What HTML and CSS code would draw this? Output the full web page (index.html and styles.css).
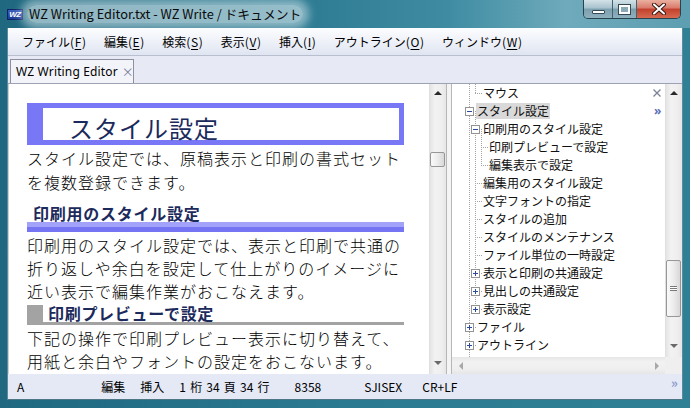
FILE: index.html
```html
<!DOCTYPE html>
<html lang="ja">
<head>
<meta charset="utf-8">
<title>WZ Writing Editor.txt - WZ Write / ドキュメント</title>
<link rel="stylesheet" href="styles.css">
</head>
<body>
<div class="window">
  <div class="titlebar">
    <span class="app-icon">WZ</span>
    <span class="title">WZ Writing Editor.txt - WZ Write / ドキュメント</span>
    <div class="caption">
      <span class="cb cb-min"><i class="g-min"></i></span>
      <span class="cb cb-max"><i class="g-max"></i></span>
      <span class="cb cb-close">
        <svg width="14" height="12" viewBox="0 0 14 12"><path d="M2 1.5 L12 10.5 M12 1.5 L2 10.5" stroke="#3a1a14" stroke-width="4" stroke-linecap="round"/><path d="M2 1.5 L12 10.5 M12 1.5 L2 10.5" stroke="#ffffff" stroke-width="2" stroke-linecap="round"/></svg>
      </span>
    </div>
  </div>
  <div class="client">
    <div class="menubar">
      <span class="menu">ファイル(<u>F</u>)</span>
      <span class="menu">編集(<u>E</u>)</span>
      <span class="menu">検索(<u>S</u>)</span>
      <span class="menu">表示(<u>V</u>)</span>
      <span class="menu">挿入(<u>I</u>)</span>
      <span class="menu">アウトライン(<u>O</u>)</span>
      <span class="menu">ウィンドウ(<u>W</u>)</span>
    </div>
    <div class="tabbar">
      <div class="tab"><span class="tab-text">WZ Writing Editor</span><span class="tab-close">×</span></div>
    </div>
    <div class="main">
      <div class="editor">
        <h1 class="h1">スタイル設定</h1>
        <p class="para">スタイル設定では、原稿表示と印刷の書式セット<br>を複数登録できます。</p>
        <h2 class="h2">印刷用のスタイル設定</h2>
        <p class="para p2">印刷用のスタイル設定では、表示と印刷で共通の<br>折り返しや余白を設定して仕上がりのイメージに<br>近い表示で編集作業がおこなえます。</p>
        <h3 class="h3">印刷プレビューで設定</h3>
        <p class="para p3">下記の操作で印刷プレビュー表示に切り替えて、<br>用紙と余白やフォントの設定をおこないます。</p>
      </div>
      <div class="vscroll">
        <div class="sb-btn"><i class="arr-up"></i></div>
        <div class="sb-track"><div class="thumb ed-thumb"></div></div>
        <div class="sb-btn sb-btn-down"><i class="arr-down"></i></div>
      </div>
      <div class="splitter"></div>
      <div class="treepane">
        <div class="tree-area">
          <div class="tree">
            <svg class="tree-lines" width="213" height="273" viewBox="0 0 213 273">
              <g stroke="#a4a4a4" stroke-width="1" stroke-dasharray="1 1" fill="none">
                <path d="M17.5 0 V273"/>
                <path d="M23.5 0 V9"/>
                <path d="M23 9.5 H30"/>
                <path d="M23.5 27 V225"/>
                <path d="M29.5 45 V81"/>
                <path d="M29 63.5 H36"/>
                <path d="M29 81.5 H36"/>
                <path d="M23 45.5 H30"/>
                <path d="M23 99.5 H30"/>
                <path d="M23 117.5 H30"/>
                <path d="M23 135.5 H30"/>
                <path d="M23 153.5 H30"/>
                <path d="M23 171.5 H30"/>
                <path d="M23 189.5 H30"/>
                <path d="M23 207.5 H30"/>
                <path d="M23 225.5 H30"/>
                <path d="M17 27.5 H24"/>
                <path d="M17 243.5 H24"/>
                <path d="M17 261.5 H24"/>
              </g>
            </svg>
            <div class="node l1 leaf"><span class="label">マウス</span></div>
            <div class="node l0"><span class="exp minus"></span><span class="label sel">スタイル設定</span></div>
            <div class="node l1"><span class="exp minus"></span><span class="label">印刷用のスタイル設定</span></div>
            <div class="node l2 leaf"><span class="label">印刷プレビューで設定</span></div>
            <div class="node l2 leaf"><span class="label">編集表示で設定</span></div>
            <div class="node l1 leaf"><span class="label">編集用のスタイル設定</span></div>
            <div class="node l1 leaf"><span class="label">文字フォントの指定</span></div>
            <div class="node l1 leaf"><span class="label">スタイルの追加</span></div>
            <div class="node l1 leaf"><span class="label">スタイルのメンテナンス</span></div>
            <div class="node l1 leaf"><span class="label">ファイル単位の一時設定</span></div>
            <div class="node l1"><span class="exp plus"></span><span class="label">表示と印刷の共通設定</span></div>
            <div class="node l1"><span class="exp plus"></span><span class="label">見出しの共通設定</span></div>
            <div class="node l1"><span class="exp plus"></span><span class="label">表示設定</span></div>
            <div class="node l0"><span class="exp plus"></span><span class="label">ファイル</span></div>
            <div class="node l0"><span class="exp plus"></span><span class="label">アウトライン</span></div>
            <svg class="tree-close" width="8" height="8" viewBox="0 0 8 8"><path d="M0.5 0.5 L7.5 7.5 M7.5 0.5 L0.5 7.5" stroke="#7b8196" stroke-width="1.3"/></svg>
            <span class="tree-more">»</span>
          </div>
          <div class="vscroll tree-vscroll">
            <div class="sb-btn"><i class="arr-up"></i></div>
            <div class="sb-track"><div class="thumb tree-thumb"><i class="grip"></i></div></div>
            <div class="sb-btn sb-btn-down"><i class="arr-down"></i></div>
          </div>
        </div>
        <div class="hscroll-row">
          <div class="hscroll">
            <div class="hb-btn"><i class="arr-left"></i></div>
            <div class="hb-track"></div>
            <div class="hb-btn"><i class="arr-right"></i></div>
          </div>
          <div class="corner"></div>
        </div>
      </div>
    </div>
    <div class="statusbar">
      <span class="pane p-a">A</span>
      <span class="pane p-edit">編集</span>
      <span class="pane p-ins">挿入</span>
      <span class="pane p-pos">1 桁 34 頁 34 行</span>
      <span class="pane p-size">8358</span>
      <span class="pane p-enc">SJISEX</span>
      <span class="pane p-eol">CR+LF</span>
      <span class="status-more">»</span>
    </div>
  </div>
</div>
</body>
</html>
```

FILE: styles.css
```css
* { box-sizing: border-box; }
html, body { margin: 0; padding: 0; }
body {
  width: 690px;
  height: 408px;
  overflow: hidden;
  font-family: "Noto Sans CJK JP", "Noto Sans", sans-serif;
  font-size: 12px;
  color: #000;
}
.window {
  width: 690px;
  height: 408px;
  display: flex;
  flex-direction: column;
  background: linear-gradient(to right, #1f6880 0%, #2a7a91 50%, #2f7f95 100%);
}

/* title bar */
.titlebar {
  height: 28px;
  flex: 0 0 28px;
  display: flex;
  align-items: flex-start;
  padding: 0 9px 0 7px;
  background: linear-gradient(to right, #1f6880 0%, #2a7890 40%, #3f8ca2 65%, #6eaabb 82%, #5d9eb1 100%);
}
.app-icon {
  width: 16px;
  height: 11px;
  margin-top: 9px;
  background: linear-gradient(#3c5fbf, #1b3a96);
  border: 1px solid #0e2466;
  color: #fff;
  font-family: "Liberation Sans", sans-serif;
  font-weight: bold;
  font-style: italic;
  font-size: 8px;
  line-height: 9px;
  text-align: center;
  letter-spacing: -0.5px;
}
.title {
  margin-left: 4px;
  margin-top: 5px;
  height: 18px;
  line-height: 18px;
  padding: 0 2px;
  font-size: 12.8px;
  color: #0a0a0a;
  background: rgba(236, 246, 248, 0.55);
  border-radius: 9px;
  box-shadow: 0 0 8px 6px rgba(236, 246, 248, 0.5);
  white-space: nowrap;
}
.caption {
  margin-left: auto;
  display: flex;
  height: 19px;
  border: 1px solid #26434f;
  border-top: 0;
  border-radius: 0 0 5px 5px;
  overflow: hidden;
}
.cb {
  height: 18px;
  display: flex;
  align-items: center;
  justify-content: center;
  border-right: 1px solid #3f6370;
}
.cb-min, .cb-max {
  background: linear-gradient(#d4e2e8 0%, #a7c2cd 45%, #7c9fae 50%, #8fb0bd 100%);
}
.cb-min { width: 29px; }
.cb-max { width: 24px; }
.cb-close {
  width: 43px;
  border-right: 0;
  background: linear-gradient(#eab0a0 0%, #d9796a 45%, #c2402c 50%, #d66a50 100%);
}
.g-min {
  display: block;
  width: 13px;
  height: 4px;
  margin-top: 6px;
  background: #fff;
  border: 1px solid #334a55;
  border-radius: 1px;
}
.g-max {
  display: block;
  width: 11px;
  height: 9px;
  border: 2px solid #fff;
  outline: 1px solid #334a55;
  background: #8aa9b6;
}

/* client */
.client {
  flex: 1;
  margin: 0 7px 8px;
  border-left: 1px solid #5d8a9c;
  border-right: 1px solid #5d8a9c;
  border-bottom: 1px solid #4d7686;
  display: flex;
  flex-direction: column;
  background: #fff;
  min-height: 0;
}
.menubar {
  height: 28px;
  flex: 0 0 28px;
  display: flex;
  align-items: center;
  padding-left: 5px;
  background: linear-gradient(#fcfdfe 0%, #eef1f8 50%, #dfe5f1 100%);
  border-bottom: 1px solid #b9bfcf;
}
.menu {
  flex: none;
  padding: 0 9px;
  font-size: 12px;
  line-height: 18px;
  white-space: nowrap;
}
.menu u { text-underline-offset: 2px; padding: 0 0.6px; }

.tabbar {
  height: 27px;
  flex: 0 0 27px;
  background: #e7eaf5;
  padding: 3px 0 0 2px;
  display: flex;
}
.tab {
  width: 124px;
  height: 24px;
  border: 1px solid #8d909e;
  border-bottom: 0;
  background: #f3f4fa;
  display: flex;
  align-items: center;
  padding-left: 5px;
  font-size: 12px;
  white-space: nowrap;
}
.tab-text { font-family: "Noto Sans", sans-serif; font-size: 12px; letter-spacing: 0.15px; }
.tab-close {
  margin-left: 4px;
  color: #7b819a;
  font-size: 12px;
}

/* main */
.main {
  height: 291px;
  flex: 0 0 291px;
  display: flex;
  border-top: 1px solid #9da2b2;
  overflow: hidden;
}
.editor {
  flex: 0 0 421px;
  background: #fff;
  padding: 19px 0 0 18px;
  overflow: hidden;
  border-left: 1px solid #d0d0d0;
}
.h1 {
  margin: 0;
  width: 377px;
  height: 42px;
  border: 5px solid #7878f7;
  border-left-width: 16px;
  padding: 8px 0 0 26px;
  font-size: 24px;
  line-height: 24px;
  font-weight: 400;
  letter-spacing: 1px;
  color: #1b2a5c;
  white-space: nowrap;
}
.para {
  margin: 2px 0 0;
  font-size: 16px;
  line-height: 23.5px;
  letter-spacing: 1px;
  font-weight: 300;
  white-space: nowrap;
  color: #000;
}
.h2 {
  margin: 0;
  width: 377px;
  padding: 10px 0 0 6px;
  font-size: 16px;
  line-height: 18px;
  font-weight: bold;
  letter-spacing: 0.75px;
  color: #1c2a5c;
  white-space: nowrap;
}
.h2::after {
  content: "";
  display: block;
  margin-left: -6px;
  height: 10px;
  background: linear-gradient(#a2a2fb 0 50%, #7575f4 50% 100%);
}
.p2 { margin-top: 2px; line-height: 23px; }
.h3 {
  margin: 2px 0 0;
  width: 377px;
  height: 20px;
  display: flex;
  border-bottom: 3px solid #a3a3a3;
  font-size: 16px;
  line-height: 16px;
  font-weight: bold;
  letter-spacing: 0.7px;
  color: #1c2a5c;
  white-space: nowrap;
}
.h3::before {
  content: "";
  flex: 0 0 16px;
  height: 17px;
  margin-right: 5px;
  background: #a3a3a3;
}
.p3 { margin-top: 2px; line-height: 23px; }

/* scrollbars */
.vscroll {
  flex: 0 0 17px;
  width: 17px;
  display: flex;
  flex-direction: column;
  background: linear-gradient(to right, #e4e4e4, #f2f2f2 30%, #efefef 70%, #e6e6e6);
  border-left: 1px solid #e0e0e0;
}
.sb-btn {
  height: 17px;
  flex: 0 0 17px;
  display: flex;
  align-items: center;
  justify-content: center;
}
.sb-btn-down { align-items: flex-start; padding-top: 4px; }
.sb-track { flex: 1; }
.thumb {
  width: 15px;
  border: 1px solid #979797;
  border-radius: 2px;
  background: linear-gradient(to right, #fafafa, #ececec 50%, #d8d8d8);
}
.ed-thumb { margin-top: 51px; height: 15px; }
.tree-thumb {
  margin-top: 159px;
  height: 57px;
  display: flex;
  align-items: center;
  justify-content: center;
}
.grip {
  display: block;
  width: 7px;
  height: 5px;
  border-top: 1px solid #7a7a7a;
  border-bottom: 1px solid #7a7a7a;
  background: linear-gradient(#fff 0 40%, #7a7a7a 40% 60%, #fff 60%);
}
.arr-up, .arr-down, .arr-left, .arr-right { display: block; width: 0; height: 0; }
.arr-up { border-left: 4px solid transparent; border-right: 4px solid transparent; border-bottom: 4px solid #2a2a2a; }
.arr-down { border-left: 4px solid transparent; border-right: 4px solid transparent; border-top: 4px solid #6a6a6a; }
.arr-left { border-top: 4px solid transparent; border-bottom: 4px solid transparent; border-right: 4px solid #a8a8a8; }
.arr-right { border-top: 4px solid transparent; border-bottom: 4px solid transparent; border-left: 4px solid #a8a8a8; }

.splitter {
  flex: 0 0 6px;
  background: #f4f4f4;
  border-left: 1px solid #b7b7b7;
  border-right: 1px solid #b7b7b7;
}

/* tree */
.treepane {
  flex: 1;
  display: flex;
  flex-direction: column;
  min-width: 0;
}
.tree-area {
  height: 273px;
  flex: 0 0 273px;
  display: flex;
}
.tree {
  flex: 1;
  position: relative;
  z-index: 0;
  background: #fff;
  overflow: hidden;
}
.tree-lines {
  position: absolute;
  left: 0;
  top: 0;
  z-index: -1;
}
.node {
  height: 18px;
  display: flex;
  align-items: flex-start;
  white-space: nowrap;
  font-size: 12px;
  color: #111;
}
.l0 { padding-left: 13px; }
.l1 { padding-left: 19px; }
.l2 { padding-left: 25px; }
.leaf .label { margin-left: 11px; }
.exp {
  position: relative;
  flex: 0 0 9px;
  width: 9px;
  height: 9px;
  margin: 5px 2px 0 0;
  border: 1px solid #939393;
  background: #fff;
}
.exp::before {
  content: "";
  position: absolute;
  left: 1px;
  top: 3px;
  width: 5px;
  height: 1px;
  background: #2a4b9b;
}
.exp.plus::after {
  content: "";
  position: absolute;
  left: 3px;
  top: 1px;
  width: 1px;
  height: 5px;
  background: #2a4b9b;
}
.label {
  display: inline-block;
  margin-top: 1px;
  padding: 0 1px;
  line-height: 16px;
  height: 16px;
}
.label.sel { background: #d9d9d9; }
.tree-close {
  position: absolute;
  left: 201px;
  top: 5px;
}
.tree-more {
  position: absolute;
  left: 202px;
  top: 20px;
  line-height: 14px;
  font-family: "Noto Sans", sans-serif;
  font-size: 12px;
  font-weight: bold;
  color: #6070b8;
}
.tree-vscroll { flex: 0 0 17px; }

.hscroll-row {
  flex: 1;
  display: flex;
}
.hscroll {
  flex: 1;
  display: flex;
  align-items: center;
  background: linear-gradient(#e6e6e6, #f2f2f2 30%, #efefef 70%, #e6e6e6);
}
.hb-btn {
  width: 17px;
  height: 17px;
  display: flex;
  align-items: center;
  justify-content: center;
}
.hb-track { flex: 1; }
.corner {
  flex: 0 0 17px;
  background: #efefef;
}

/* status bar */
.statusbar {
  flex: 1;
  display: flex;
  align-items: center;
  padding-left: 9px;
  background: #e4e9f5;
  font-size: 12px;
  white-space: nowrap;
}
.pane { flex: none; line-height: 16px; }
.p-a { margin-right: 77px; }
.p-edit { margin-right: 15px; }
.p-ins { margin-right: 15px; }
.p-pos { margin-right: 25px; word-spacing: 1.5px; }
.p-size { margin-right: 43px; }
.p-enc { margin-right: 20px; }
.status-more {
  flex: none;
  margin-left: auto;
  margin-right: 4px;
  margin-top: -8px;
  color: #8c9bcc;
  font-size: 13px;
  font-weight: bold;
}
```
